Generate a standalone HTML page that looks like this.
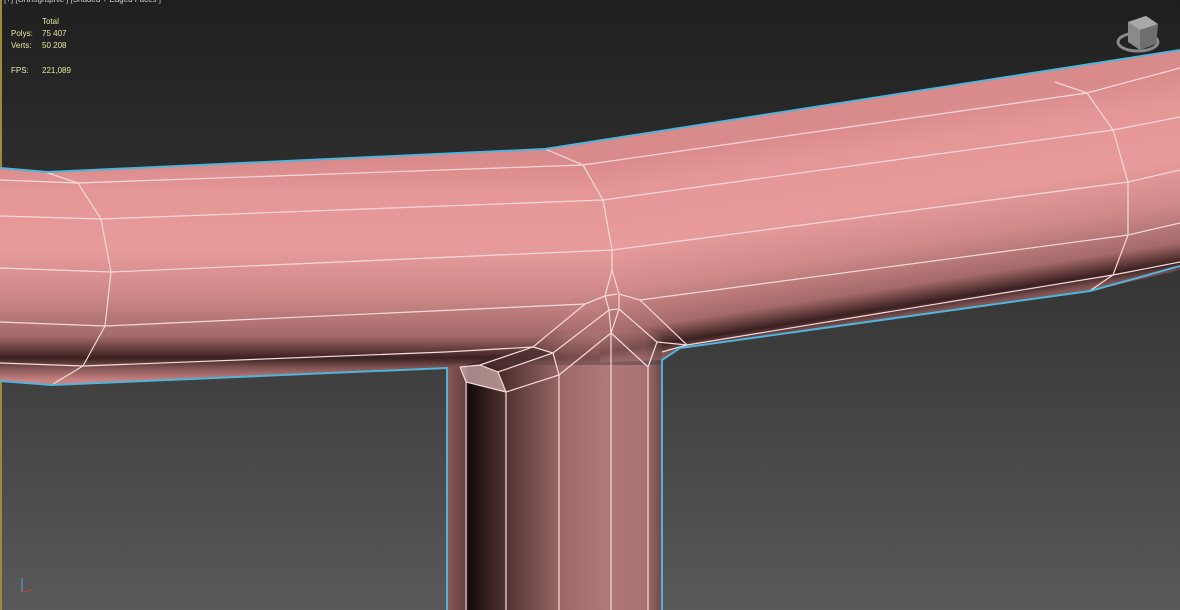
<!DOCTYPE html>
<html><head><style>
html,body{margin:0;padding:0;width:1180px;height:610px;overflow:hidden;background:#333}
.t{position:absolute;font-family:"Liberation Sans",sans-serif;font-size:8px;color:#e8e6a0;line-height:12px;white-space:pre}
</style></head><body>
<svg width="1180" height="610" viewBox="0 0 1180 610" style="position:absolute;left:0;top:0">
<defs>
<linearGradient id="bg" x1="0" y1="0" x2="0" y2="1">
<stop offset="0" stop-color="#1f1f1f"/><stop offset="0.5" stop-color="#383838"/><stop offset="1" stop-color="#595959"/>
</linearGradient>
<linearGradient id="tl" gradientUnits="userSpaceOnUse" x1="300" y1="160" x2="300" y2="380">
<stop offset="0" stop-color="#d98a8a"/><stop offset="0.15" stop-color="#e59696"/><stop offset="0.4" stop-color="#e89b9b"/><stop offset="0.6" stop-color="#d08a8a"/><stop offset="0.8" stop-color="#a56a6a"/><stop offset="0.9" stop-color="#3a2020"/><stop offset="0.94" stop-color="#7a5050"/><stop offset="1" stop-color="#c88080"/>
</linearGradient>
<linearGradient id="tr" gradientUnits="userSpaceOnUse" x1="600" y1="160" x2="634" y2="377">
<stop offset="0" stop-color="#d98a8a"/><stop offset="0.15" stop-color="#e59696"/><stop offset="0.4" stop-color="#e89b9b"/><stop offset="0.6" stop-color="#d08a8a"/><stop offset="0.78" stop-color="#a56a6a"/><stop offset="0.87" stop-color="#3a2020"/><stop offset="0.91" stop-color="#7a5050"/><stop offset="1" stop-color="#c88080"/>
</linearGradient>
<linearGradient id="tv" x1="0" y1="0" x2="1" y2="0">
<stop offset="0" stop-color="#8a5a5a"/><stop offset="0.08" stop-color="#6a4040"/><stop offset="0.1" stop-color="#150a0a"/><stop offset="0.3" stop-color="#5a3838"/><stop offset="0.55" stop-color="#a06a6a"/><stop offset="0.75" stop-color="#b27878"/><stop offset="0.92" stop-color="#a87070"/><stop offset="1" stop-color="#6a4848"/>
</linearGradient>
<clipPath id="hc"><polygon points="0,168 48,172 545,149 1180,50 1180,270 1090,291 680,348 662,360 447,368 52,385 0,381"/></clipPath>
<clipPath id="jc"><polygon points="460,367 533,347 585,304 612,270 640,300 687,345 662,352 662,610 447,610 447,368"/></clipPath>
</defs>
<rect width="1180" height="610" fill="url(#bg)"/>
<rect x="0" y="0" width="2" height="610" fill="#a08a3a"/>
<g clip-path="url(#hc)">
<rect x="0" y="0" width="601" height="400" fill="url(#tl)"/>
<rect x="600" y="0" width="580" height="400" fill="url(#tr)"/>
</g>
<g clip-path="url(#jc)">
<rect x="447" y="330" width="215" height="280" fill="url(#tv)" opacity="0.55"/>
<rect x="447" y="365" width="215" height="245" fill="url(#tv)"/>
<polygon points="480,365 533,347 553,353 498,372" fill="#4a2c2c" opacity="0.7"/>
<polygon points="480,365 498,372 506,392 466,382 460,367" fill="#c8a4a4" opacity="0.8"/>
</g>
<g fill="none" stroke="#f6dada" stroke-width="1.2">
<polyline points="0,180 78,183 583,165 1087,93 1180,68"/>
<polyline points="0,216 101,219 603,200 1113,130 1180,117"/>
<polyline points="0,268 111,272 612,250 1128,182 1180,170"/>
<polyline points="0,322 105,326 585,304 605,296"/>
<polyline points="619,294 640,300 1128,235 1180,223"/>
<polyline points="0,363 83,366 445,352 533,347"/>
<polyline points="687,345 1113,275 1180,262"/>
<polyline points="45,172 78,183 101,219 111,272 105,326 83,366 53,384"/>
<polyline points="545,149 583,165 603,200 612,250 612,270"/>
<polyline points="1055,82 1087,93 1113,130 1128,182 1128,235 1113,275 1088,292"/>
<polyline points="612,270 605,296 609,310 619,309 619,294 612,270"/>
<polyline points="605,296 617,294"/>
<polyline points="605,296 585,304 533,347 480,365 460,367"/>
<polyline points="609,310 553,353 498,372 480,365"/>
<polyline points="533,347 553,353 559,375 506,392 498,372"/>
<polyline points="460,367 466,382 506,392"/>
<polyline points="609,310 611,333 619,309"/>
<polyline points="611,333 559,375"/>
<polyline points="619,309 657,342 648,367"/>
<polyline points="611,333 648,367"/>
<polyline points="640,300 687,345 662,352"/>
<polyline points="657,342 687,345"/>
<line x1="466" y1="382" x2="466" y2="610"/>
<line x1="506" y1="392" x2="506" y2="610"/>
<line x1="559" y1="375" x2="559" y2="610"/>
<line x1="611" y1="333" x2="611" y2="610"/>
<line x1="648" y1="367" x2="648" y2="610"/>
</g>
<g fill="none" stroke="#4fb4dc" stroke-width="2">
<polyline points="0,168 48,172 545,149 1180,50"/>
<polyline points="0,381 52,385 447,368 447,610"/>
<polyline points="662,610 662,360 680,348 1090,291 1180,266"/>
</g>
<ellipse cx="1138" cy="42" rx="20" ry="9" fill="none" stroke="#888" stroke-width="3"/>
<polygon points="1128,22 1146,16 1158,24 1156,44 1140,50 1128,42" fill="#8a8a8a"/>
<polygon points="1128,22 1146,16 1158,24 1140,30" fill="#a8a8a8"/>
<polygon points="1140,30 1158,24 1156,44 1140,50" fill="#6e6e6e"/>
<line x1="22" y1="592" x2="22" y2="578" stroke="#5a9adc"/>
<line x1="22" y1="592" x2="32" y2="590" stroke="#c04040"/>
</svg>
<div class="t" style="left:4px;top:-6px;color:#cfcfcf">[+] [Orthographic ] [Shaded + Edged Faces ]</div>
<div class="t" style="left:42px;top:16px">Total</div>
<div class="t" style="left:11px;top:28px">Polys:</div><div class="t" style="left:42px;top:28px">75 407</div>
<div class="t" style="left:11px;top:40px">Verts:</div><div class="t" style="left:42px;top:40px">50 208</div>
<div class="t" style="left:11px;top:65px">FPS:</div><div class="t" style="left:42px;top:65px">221,089</div>
</body></html>
